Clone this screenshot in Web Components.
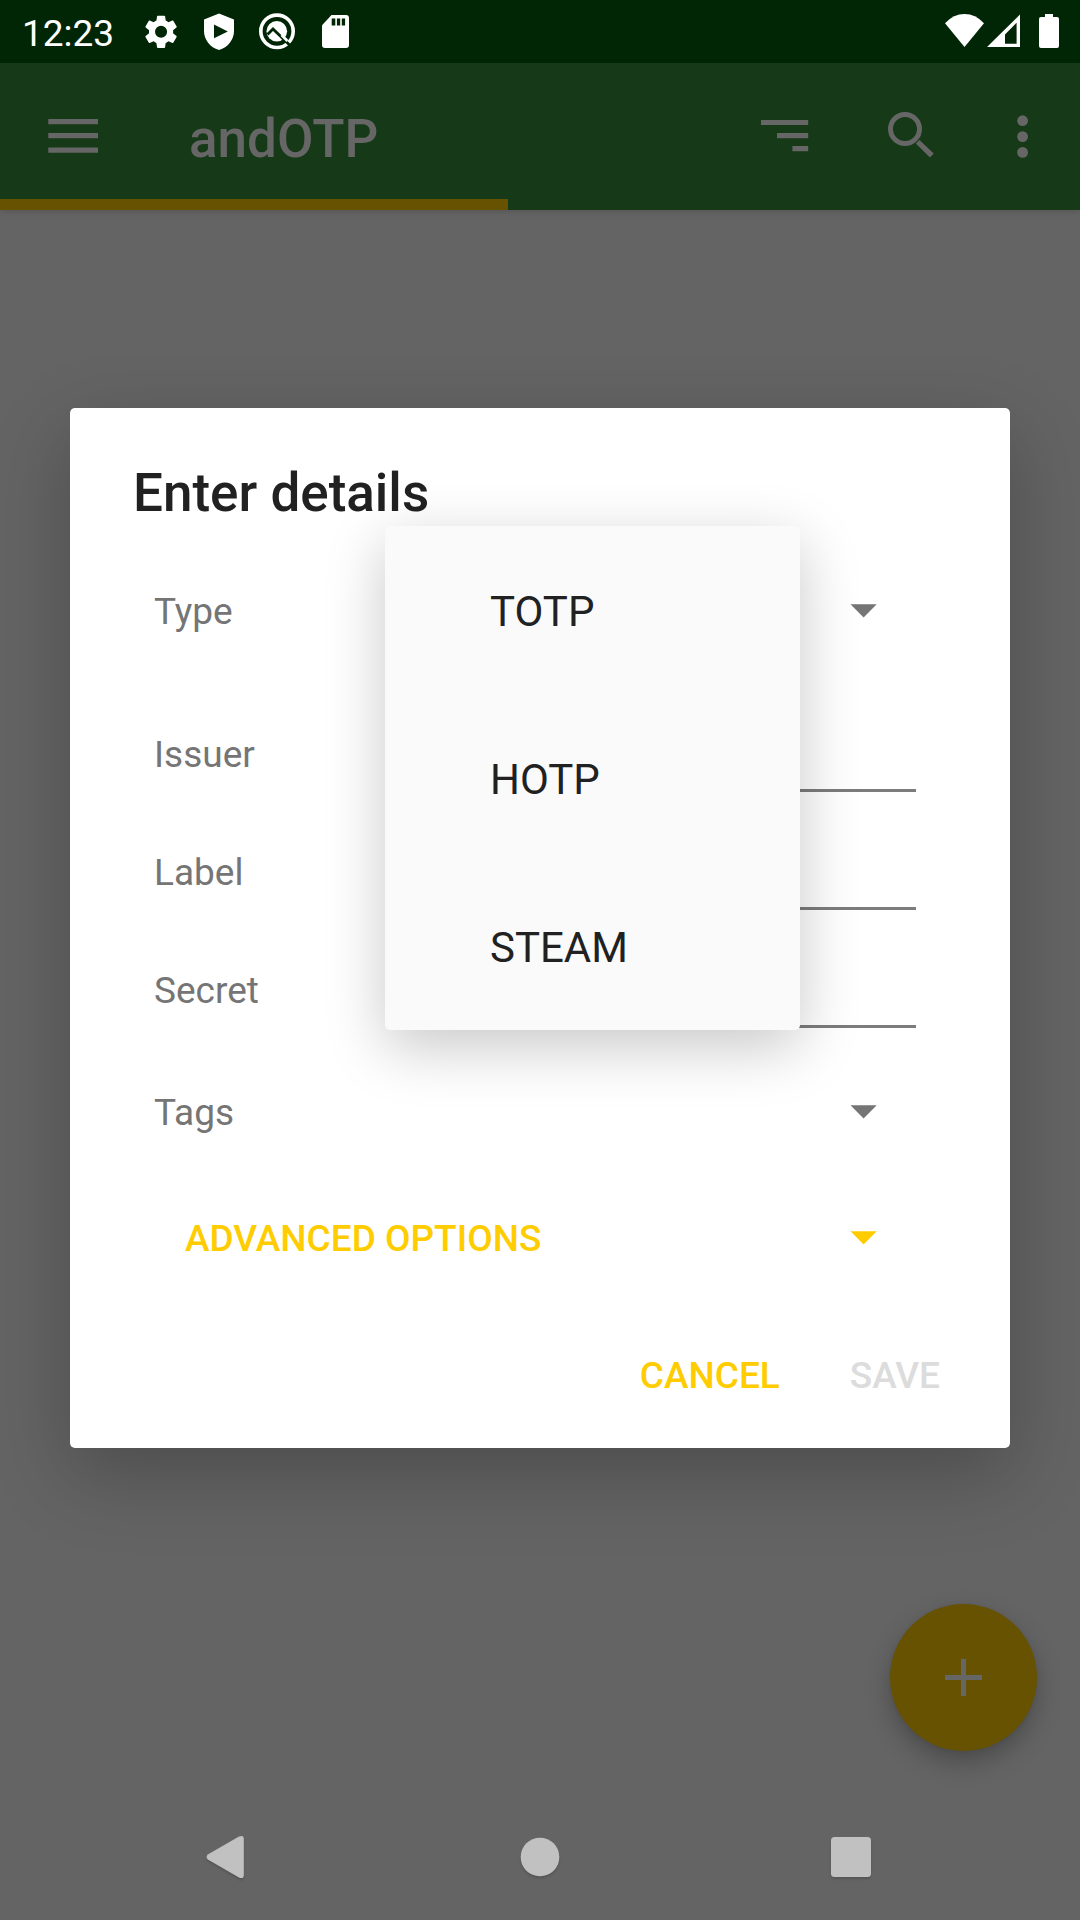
<!DOCTYPE html>
<html lang="en">
<head>
<meta charset="utf-8">
<title>andOTP</title>
<style>
  html, body { margin: 0; padding: 0; }
  body { width: 1080px; height: 1920px; overflow: hidden; font-family: Roboto, "Noto Sans", sans-serif; }
</style>
</head>
<body>
<otp-screen>
  <status-bar slot="status" time="12:23"></status-bar>
  <app-toolbar slot="toolbar" progress="508">andOTP</app-toolbar>
  <nav-bar slot="nav"></nav-bar>
  <fab-button slot="fab"></fab-button>
  <detail-dialog slot="dialog" heading="Enter details">
    <form-row kind="spinner">Type</form-row>
    <form-row kind="field" class="first">Issuer</form-row>
    <form-row kind="field">Label</form-row>
    <form-row kind="field">Secret</form-row>
    <form-row kind="spinner">Tags</form-row>
    <form-row kind="accent">ADVANCED OPTIONS</form-row>
    <text-button slot="actions">CANCEL</text-button>
    <text-button slot="actions" disabled>SAVE</text-button>
    <popup-menu slot="popup">
      <menu-option>TOTP</menu-option>
      <menu-option>HOTP</menu-option>
      <menu-option>STEAM</menu-option>
    </popup-menu>
  </detail-dialog>
</otp-screen>
<script>
const define = (name, html, setup) => {
  const tpl = document.createElement('template');
  tpl.innerHTML = html;
  customElements.define(name, class extends HTMLElement {
    constructor() {
      super();
      this.attachShadow({ mode: 'open' }).append(tpl.content.cloneNode(true));
    }
    connectedCallback() { if (setup) setup(this, this.shadowRoot); }
  });
};

define('otp-screen', `
<style>
  :host { display: flex; flex-direction: column; position: relative; width: 1080px; height: 1920px; background: #646464; }
  .body { flex: 1; }
  .fab { position: absolute; right: 43px; bottom: 169px; }
  .dialog { position: absolute; left: 70px; top: 408px; }
</style>
<slot name="status"></slot>
<slot name="toolbar"></slot>
<div class="body"></div>
<slot name="nav"></slot>
<div class="fab"><slot name="fab"></slot></div>
<div class="dialog"><slot name="dialog"></slot></div>`);

define('status-bar', `
<style>
  :host { display: flex; justify-content: space-between; height: 63px; background: #002606; color: #fff; }
  .time { width: 140px; padding-left: 22px; box-sizing: border-box; font-size: 37px; line-height: 68px; }
  .side { display: flex; }
  svg { display: block; fill: #fff; }
</style>
<div class="side">
  <div class="time"></div>
  <svg width="220" height="63" viewBox="140 0 220 63">
    <g transform="translate(140.9 11.6) scale(1.68)"><path d="M19.14 12.94c.04-.3.06-.61.06-.94 0-.32-.02-.64-.07-.94l2.03-1.58c.18-.14.23-.41.12-.61l-1.92-3.32c-.12-.22-.37-.29-.59-.22l-2.39.96c-.5-.38-1.03-.7-1.62-.94l-.36-2.54c-.04-.24-.24-.41-.48-.41h-3.84c-.24 0-.43.17-.47.41l-.36 2.54c-.59.24-1.13.57-1.62.94l-2.39-.96c-.22-.08-.47 0-.59.22L2.74 8.87c-.12.21-.08.47.12.61l2.03 1.58c-.05.3-.09.63-.09.94s.02.64.07.94l-2.03 1.58c-.18.14-.23.41-.12.61l1.92 3.32c.12.22.37.29.59.22l2.39-.96c.5.38 1.03.7 1.62.94l.36 2.54c.05.24.24.41.48.41h3.84c.24 0 .44-.17.47-.41l.36-2.54c.59-.24 1.13-.56 1.62-.94l2.39.96c.22.08.47 0 .59-.22l1.92-3.32c.12-.22.07-.47-.12-.61zM12 15.6a3.6 3.6 0 1 1 0-7.2 3.6 3.6 0 0 1 0 7.2z"/></g>
    <path fill-rule="evenodd" d="M219 13.6L234 19.6V31C234 39.500 228 47.500 219 50C210 47.500 204 39.500 204 31V19.600ZM214 24.600V38.200L227.800 31.400Z"/>
    <circle cx="277" cy="31.300" r="16.200" fill="none" stroke="#fff" stroke-width="3.600"/>
    <circle cx="276.800" cy="31.300" r="10.300"/>
    <path d="M267.500 34.500L273 29L288 43.500L292 47.500" fill="none" stroke="#002606" stroke-width="2.800"/>
    <path d="M281.500 35L287.500 41" fill="none" stroke="#fff" stroke-width="2.600"/>
    <path d="M322 25.300L331.500 15H346Q349 15 349 18V45Q349 48 346 48H325Q322 48 322 45Z"/>
    <path fill="#002606" d="M331.700 18.500h3.600v7h-3.600zM336.900 18.500h3.300v7h-3.300zM341.800 18.500h3.300v7h-3.300z"/>
  </svg>
</div>
<svg width="140" height="63" viewBox="940 0 140 63">
  <path d="M945 23.300Q953.500 14 964.500 14T984 23.300L964.500 47Z"/>
  <path fill-rule="evenodd" d="M987 47L1020 14.500V47ZM1005 43.700H1016.600V22.800L1005 34.500Z"/>
  <path d="M1045 14H1053V17H1057Q1059 17 1059 19V46Q1059 48 1057 48H1041Q1039 48 1039 46V19Q1039 17 1041 17H1045Z"/>
</svg>`, (el, root) => { root.querySelector('.time').textContent = el.getAttribute('time'); });

define('app-toolbar', `
<style>
  :host { display: flex; flex-direction: column; height: 147px; background: #163918; color: #666; box-shadow: 0 2px 6px rgba(0,0,0,.14); }
  .bar { flex: 1; display: flex; align-items: flex-start; }
  .title { flex: 1; padding: 45px 0 0 40px; font-size: 53px; line-height: 62px; font-weight: 500; }
  svg { display: block; fill: #666; }
  .progress { height: 11px; background: #665200; }
</style>
<div class="bar">
  <svg width="149" height="136" viewBox="0 63 149 136"><path d="M48.300 119H98v5.300H48.300zM48.300 133H98v5.300H48.300zM48.300 147.400H98v5.300H48.300z"/></svg>
  <div class="title"><slot></slot></div>
  <svg width="340" height="136" viewBox="740 63 340 136">
    <path d="M761 120h47.200v5H761zM777 133h31.200v5.200H777zM792.400 146h15.800v5.200h-15.800z"/>
    <circle cx="905" cy="129" r="14.500" fill="none" stroke="#666" stroke-width="5"/>
    <path d="M916 143.500L919.500 140L933.700 153.500L930 157.500L916.800 144.600Z"/>
    <circle cx="1022.600" cy="120.700" r="5.400"/><circle cx="1022.600" cy="136.600" r="5.400"/><circle cx="1022.600" cy="152.400" r="5.400"/>
  </svg>
</div>
<div class="progress"></div>`, (el, root) => { root.querySelector('.progress').style.width = el.getAttribute('progress') + 'px'; });

define('nav-bar', `
<style>
  :host { display: block; height: 126px; }
  svg { display: block; fill: #c1c1c1; filter: drop-shadow(0 2px 1px rgba(0,0,0,.14)); }
</style>
<svg width="1080" height="126" viewBox="0 1794 1080 126">
  <path d="M207.800 1854.500L239 1836.500Q243.800 1834.500 243.800 1839V1875Q243.800 1879.500 239 1877.500L207.800 1859.500Q205.300 1857 207.800 1854.500Z"/>
  <circle cx="540" cy="1857" r="19.300"/>
  <rect x="831" y="1837" width="40" height="40" rx="3.500"/>
</svg>`);

define('fab-button', `
<style>
  :host { display: grid; place-items: center; width: 147px; height: 147px; border-radius: 50%; background: #665200; box-shadow: 0 11px 24px rgba(0,0,0,.25), 0 1px 4px rgba(0,0,0,.06); }
  svg { display: block; fill: #666; }
</style>
<svg width="37" height="37" viewBox="0 0 37 37"><path d="M0 16h16V0h5v16h16v5H21v16h-5V21H0z"/></svg>`);

define('detail-dialog', `
<style>
  :host { display: flex; flex-direction: column; position: relative; width: 940px; height: 1040px; background: #fff; border-radius: 5px; color: #212121; box-shadow: 0 26px 80px rgba(0,0,0,.24); }
  h2 { margin: 0; padding: 54px 63px 24px; font-size: 53px; line-height: 62px; font-weight: 500; }
  .actions { display: flex; justify-content: flex-end; gap: 70px; padding: 12px 70px 0 0; }
  .popup { position: absolute; left: 315px; top: 118px; }
</style>
<h2></h2>
<slot></slot>
<div class="actions"><slot name="actions"></slot></div>
<div class="popup"><slot name="popup"></slot></div>`, (el, root) => { root.querySelector('h2').textContent = el.getAttribute('heading'); });

define('form-row', `
<style>
  :host { display: flex; align-items: center; height: 126px; padding: 0 133px 0 84px; font-size: 37px; line-height: 44px; color: #757575; }
  :host([kind="field"]) { height: 118px; padding-right: 94px; }
  :host(.first) { margin-top: 21px; }
  :host([kind="accent"]) { padding-left: 115px; color: #fc0; font-weight: 500; }
  .label { width: 241px; padding-top: 2px; white-space: nowrap; }
  :host([kind="accent"]) .label { width: auto; }
  .line { display: none; flex: 1; height: 3px; margin-top: 73px; background: #7c7c7c; }
  svg { display: block; margin-left: auto; fill: currentColor; }
  :host([kind="field"]) .line { display: block; }
  :host([kind="field"]) svg { display: none; }
</style>
<div class="label"><slot></slot></div>
<div class="line"></div>
<svg width="27" height="14" viewBox="0 0 27 14"><path d="M.5.300H26.700L13.600 13.400z"/></svg>`);

define('text-button', `
<style>
  :host { display: flex; align-items: center; height: 126px; font-size: 37px; line-height: 44px; font-weight: 500; color: #fc0; }
  :host([disabled]) { color: #dcdcdc; }
</style>
<slot></slot>`);

define('popup-menu', `
<style>
  :host { display: flex; flex-direction: column; width: 415px; background: #fafafa; border-radius: 5px; box-shadow: 0 17px 60px rgba(0,0,0,.22); }
</style>
<slot></slot>`);

define('menu-option', `
<style>
  :host { display: flex; align-items: center; height: 168px; padding: 4px 0 0 105px; box-sizing: border-box; font-size: 42px; line-height: 50px; color: #212121; }
</style>
<slot></slot>`);
</script>
</body>
</html>
